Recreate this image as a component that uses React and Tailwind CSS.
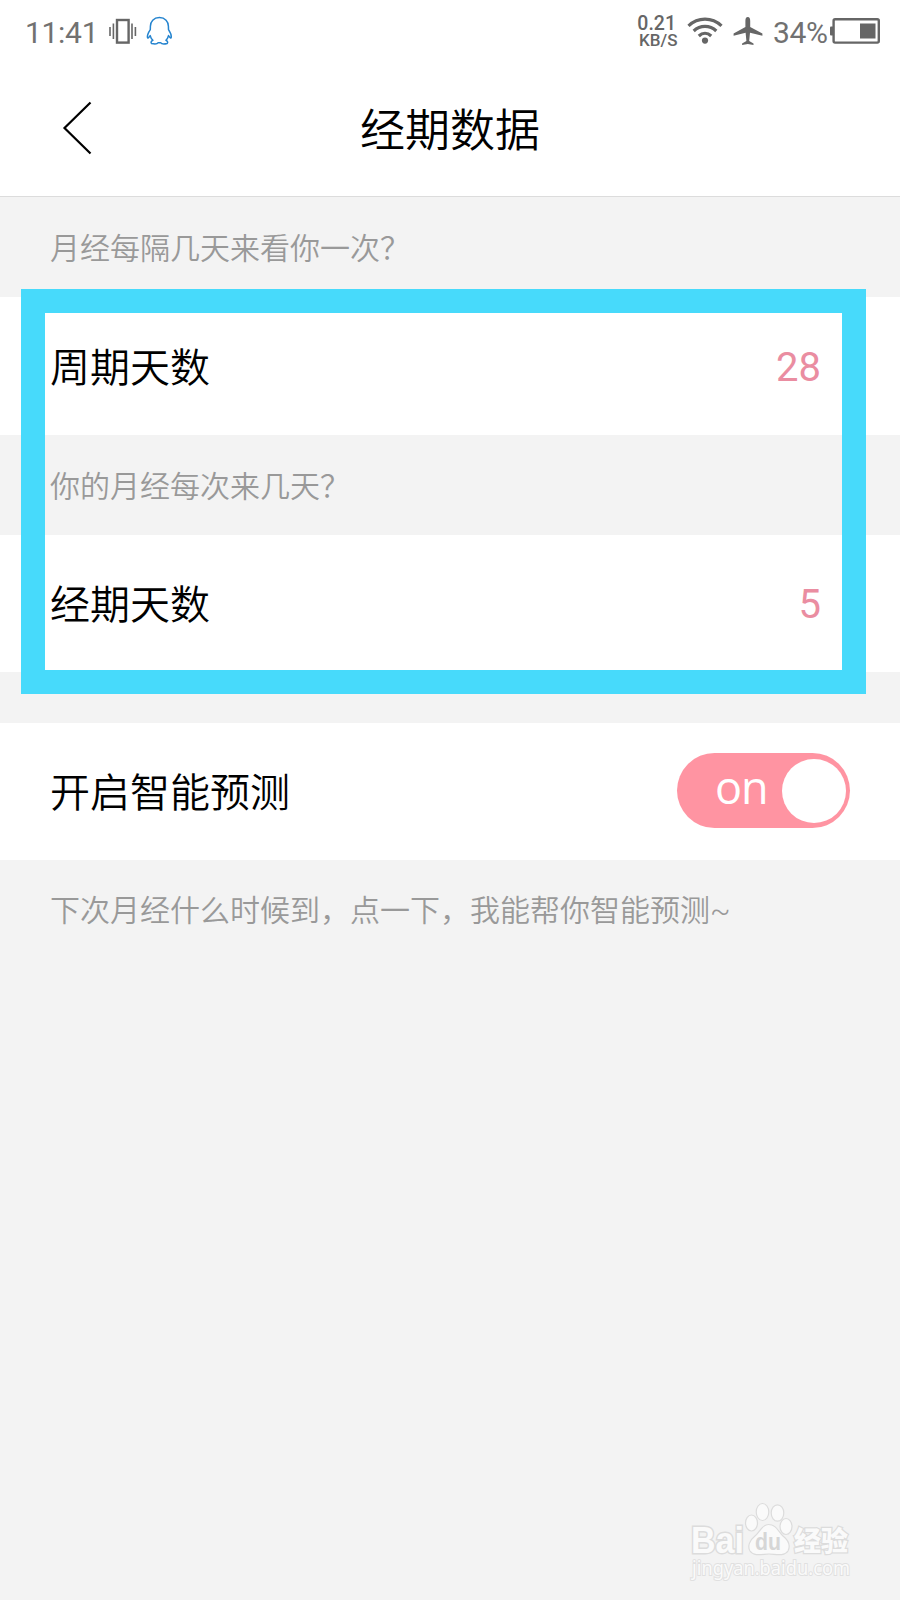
import React from "react";

function StatusBar() {
  return (
    <div className="flex h-[62px] shrink-0 items-center justify-between pl-[25px] pr-[20px] font-['Roboto',sans-serif] text-[#666]">
      <div className="flex items-center">
        <span className="w-[84px] whitespace-nowrap pt-[4px] text-[30px] leading-[30px] tracking-[-0.3px] text-[#717171]">11:41</span>
        <svg className="h-[28px] w-[28px]" viewBox="0 0 28 28" fill="none" stroke="#666">
          <rect x="8" y="3" width="11.6" height="22.6" strokeWidth="2.4" />
          <path d="M4.4 6.5V22M23 6.5V22" strokeWidth="1.6" />
          <path d="M1 10V19M26.4 10V19" strokeWidth="1.6" />
        </svg>
        <svg className="ml-[8.5px] h-[30px] w-[28px]" viewBox="0 0 28 30" fill="none" stroke="#2584cf" strokeWidth="1.5" strokeLinejoin="round" strokeLinecap="round">
          <path d="M13.4 1.6C7.6 1.6 4.4 5.6 4.4 10.3L4.3 13.6C2.5 16.3 1.3 18.6 1.4 21C1.5 22.8 2.8 21.8 4.2 19.6C4.7 21.7 5.6 23.2 6.9 24.3C5.1 25 4.6 26.6 5.5 27.5C8.5 28.2 11.4 28 12.2 26.7H14.6C15.4 28 18.3 28.2 21.2 27.5C22.1 26.6 21.6 25 19.9 24.3C21.2 23.2 22 21.7 22.5 19.6C23.9 21.8 25.2 22.8 25.3 21C25.4 18.6 24.3 16.3 22.5 13.6L22.4 10.3C22.4 5.6 19.2 1.6 13.4 1.6Z" />
        </svg>
      </div>
      <div className="flex items-center">
        <div className="flex w-[42px] flex-col items-end pt-[1px] font-medium">
          <span className="mr-[2px] text-[19.5px] leading-[17px]">0.21</span>
          <span className="mr-[0.5px] whitespace-nowrap text-[17px] leading-[17px]">KB/S</span>
        </div>
        <svg className="ml-[9px] h-[28px] w-[36px]" viewBox="0 0 36 28" fill="none" stroke="#666" strokeWidth="3.2">
          <path d="M1.5 8.8C11-.2 25 -.2 34.5 8.8" />
          <path d="M6.7 14C13.2 7.8 22.8 7.8 29.3 14" />
          <path d="M11.8 19C15.5 15.6 20.5 15.6 24.2 19" />
          <circle cx="18" cy="23.6" r="3.1" fill="#666" stroke="none" />
        </svg>
        <svg className="ml-[10px] h-[30px] w-[30px]" viewBox="0 0 30 30" fill="#666">
          <path d="M14.8 1C16.5 1 17.2 2.7 17.2 4.8V11L29.4 17.6V19.8L17 16.8L16.2 25L20.5 27.4V29L14.8 28L9.1 29V27.4L13.4 25L12.6 16.8L.6 19.8V17.6L12.4 11V4.8C12.4 2.7 13.1 1 14.8 1Z" />
        </svg>
        <span className="ml-[10px] w-[56px] whitespace-nowrap pt-[4px] text-[30px] leading-[30px] tracking-[-0.3px] text-[#717171]">34%</span>
        <svg className="ml-[1px] h-[26px] w-[50px]" viewBox="0 0 50 26">
          <rect x="3.6" y="1.2" width="45.2" height="23.4" rx="1.5" fill="none" stroke="#666" strokeWidth="2.4" />
          <rect x="0" y="8.5" width="3.5" height="9" rx="1" fill="#666" />
          <rect x="30" y="5.5" width="15.5" height="15" fill="#666" />
        </svg>
      </div>
    </div>
  );
}

function Header() {
  return (
    <header className="grid h-[135px] shrink-0 grid-cols-[120px_1fr_120px] items-center border-b border-[#dcdcdc] pb-[2px]">
      <svg className="ml-[62px] h-[54px] w-[32px]" viewBox="0 0 32 54" fill="none" stroke="#000" strokeWidth="2.2">
        <path d="M28.5 1.5L2.5 27L28.5 52.5" />
      </svg>
      <h1 className="text-center text-[45px] font-[350] leading-[60px] text-black">经期数据</h1>
    </header>
  );
}

function Caption({ children }) {
  return (
    <div className="flex h-[100px] shrink-0 items-center pb-[2px] pl-[50px] text-[30px] font-[350] leading-[40px] text-[#999]">
      <span>{children}</span>
    </div>
  );
}

function Row({ label, children }) {
  return (
    <div className="flex shrink-0 items-center justify-between bg-white pl-[50px] text-[40px] font-[350] leading-[50px] text-black">
      <span className="pb-[3px]">{label}</span>
      {children}
    </div>
  );
}

function Value({ children }) {
  return <span className="mr-[79px] pt-[3px] font-['Roboto',sans-serif] text-[40px] font-normal text-[#ea8da1]">{children}</span>;
}

function Toggle() {
  return (
    <div className="mb-[2px] mr-[50px] flex h-[75px] w-[173px] items-center justify-between rounded-full bg-[#ff94a2] pl-[38px] pr-[4px]">
      <span className="pb-[7px] font-['Open_Sans',sans-serif] text-[45px] font-normal leading-[50px] tracking-[-1px] text-white">on</span>
      <span className="mt-[1px] h-[64px] w-[64px] rounded-full bg-white" />
    </div>
  );
}

function Watermark() {
  return (
    <svg className="mt-auto mb-[4px] ml-[682px] h-[98px] w-[180px] shrink-0" viewBox="682 1498 180 98">
      <g fill="#fafafa" stroke="#dcdcdc" strokeWidth="1.2">
        <ellipse cx="751.5" cy="1523" rx="6" ry="8" />
        <ellipse cx="762.5" cy="1512" rx="6.3" ry="8.5" />
        <ellipse cx="777.5" cy="1513" rx="6.3" ry="8.2" />
        <ellipse cx="786" cy="1526.5" rx="6" ry="8" />
        <path d="M768.5 1524.5C762 1524.5 760 1532 755 1536C750 1540 747 1546 750 1551C754 1557 763 1554 769 1554C775 1554 784 1557 788 1551C791 1545 788 1540 783 1536C778 1531 776 1524.5 768.5 1524.5Z" />
        <text x="691" y="1553" textLength="53" lengthAdjust="spacingAndGlyphs" fontSize="36" fontWeight="700" strokeWidth="3" paintOrder="stroke" fontFamily="Liberation Sans, sans-serif">Bai</text>
        <text x="755" y="1550" textLength="26" lengthAdjust="spacingAndGlyphs" fill="#d6d6d6" stroke="none" fontSize="24" fontWeight="700" fontFamily="Liberation Sans, sans-serif">du</text>
        <text x="794" y="1551" fontSize="27" fontWeight="900" textLength="54" strokeWidth="2.4" paintOrder="stroke" fontFamily="Noto Sans CJK SC, sans-serif">经验</text>
        <text x="692" y="1575" fontSize="20" textLength="158" lengthAdjust="spacingAndGlyphs" strokeWidth="2" stroke="#e0e0e0" paintOrder="stroke" fontFamily="Noto Sans, sans-serif">jingyan.baidu.com</text>
      </g>
    </svg>
  );
}

export default function App() {
  return (
    <main className="relative flex h-[1600px] w-[900px] flex-col overflow-hidden bg-[#f3f3f3] font-['Noto_Sans_CJK_SC',sans-serif]">
      <div className="shrink-0 bg-white">
        <StatusBar />
        <Header />
      </div>
      <Caption>月经每隔几天来看你一次？</Caption>
      <div className="grid h-[138px] shrink-0">
        <Row label="周期天数">
          <Value>28</Value>
        </Row>
      </div>
      <Caption>你的月经每次来几天？</Caption>
      <div className="grid h-[137px] shrink-0">
        <Row label="经期天数">
          <Value>5</Value>
        </Row>
      </div>
      <div className="mt-[51px] grid h-[137px] shrink-0">
        <Row label="开启智能预测">
          <Toggle />
        </Row>
      </div>
      <Caption>
        下次月经什么时候到，点一下，我能帮你智能预测<span className="font-['Roboto',sans-serif]">~</span>
      </Caption>
      <Watermark />
      <div className="pointer-events-none absolute left-[21px] top-[289px] h-[405px] w-[845px] border-[24px] border-[#47dafb]" />
    </main>
  );
}
